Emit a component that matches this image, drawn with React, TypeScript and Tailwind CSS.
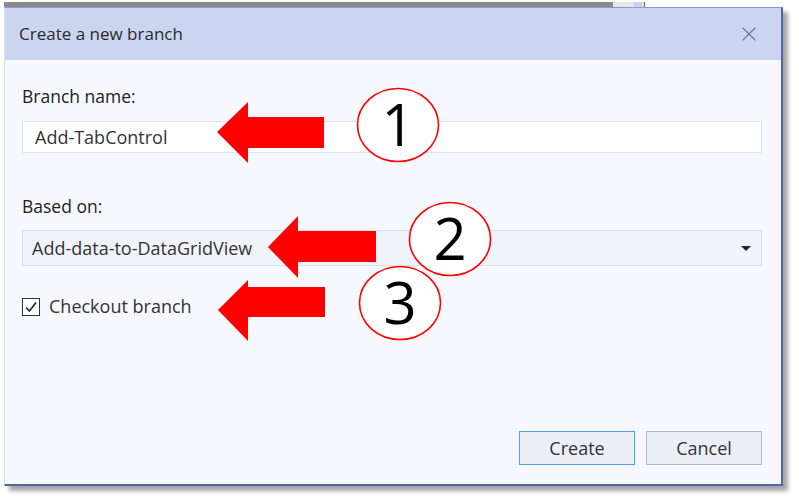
import { X } from "lucide-react";

const ui = { fontFamily: '"Open Sans", "Noto Sans", sans-serif' };

function Arrow({ tip, headBack, headTop, headBottom, shaftTop, shaftBottom, end }: any) {
  const cy = tip[1];
  return (
    <polygon
      points={`${tip[0]},${cy} ${headBack},${headTop} ${headBack},${shaftTop} ${end},${shaftTop} ${end},${shaftBottom} ${headBack},${shaftBottom} ${headBack},${headBottom}`}
      fill="#ff0000"
    />
  );
}

function Callout({ cx, cy, n }: { cx: number; cy: number; n: string }) {
  return (
    <g>
      <ellipse cx={cx} cy={cy} rx={40.5} ry={36.5} fill="#ffffff" stroke="#ff0000" strokeWidth={1.6} />
      <text
        x={cx}
        y={cy + 21}
        textAnchor="middle"
        fontSize={58}
        fontFamily='"Open Sans", "Liberation Sans", sans-serif'
        fill="#000"
      >
        {n}
      </text>
    </g>
  );
}

export default function App() {
  return (
    <div className="relative w-[799px] h-[502px] bg-white overflow-hidden" style={ui}>
      {/* window behind the dialog */}
      <div className="flex h-[7px] pt-[2px] pl-[4px]">
        <div className="w-[609px] h-[5px] bg-[#8a8a8a]" />
        <div className="w-[32px] h-[5px] bg-[#e4e6ea] border-r border-[#666] flex justify-end pr-[2px]">
          <div className="w-[8px] h-[5px] bg-[#c5d2e8]" />
        </div>
      </div>

      <div className="ml-[4px] w-[779px] h-[479px] flex flex-col border border-[#4f67a3] border-t-[#8c9cc8] border-l-[#d9def0] border-b-2 border-r-2 shadow-[5px_5px_4px_rgba(0,0,0,0.35)] bg-[#f6f8fe]">
        <div className="h-[52px] shrink-0 bg-[#ccd5ef] flex items-center justify-between pl-[14px] pr-[20px]">
          <span className="text-[17px] text-[#2a2a2a]">Create a new branch</span>
          <X size={24} strokeWidth={1.1} className="text-[#6b7090]" />
        </div>

        <div className="flex flex-col flex-1 pl-[17px] pr-[19px]">
          <div className="mt-[24px] text-[17.5px] text-[#222] leading-[24px]">Branch name:</div>
          <div className="mt-[13px] h-[32px] bg-white border border-[#dfe2ea] flex items-center pl-[12px] text-[18px] text-[#333]">
            Add-TabControl
          </div>

          <div className="mt-[41px] text-[17.5px] text-[#222] leading-[24px]">Based on:</div>
          <div className="mt-[12px] h-[36px] bg-[#f1f3fb] border border-[#dcdfe8] flex items-center justify-between pl-[9px] pr-[10px] text-[18px] text-[#333]">
            <span>Add-data-to-DataGridView</span>
            <span className="w-0 h-0 border-l-[5px] border-r-[5px] border-t-[5px] border-l-transparent border-r-transparent border-t-[#222]" />
          </div>

          <div className="mt-[27px] flex items-center gap-[9px]">
            <div className="w-[18px] h-[18px] border border-[#333] bg-white flex items-center justify-center">
              <svg width="14" height="14" viewBox="0 0 14 14">
                <path d="M2 7.5 L5.5 11 L12 2.5" fill="none" stroke="#222" strokeWidth="1.6" />
              </svg>
            </div>
            <span className="text-[18px] text-[#333]">Checkout branch</span>
          </div>

          <div className="mt-auto mb-[19px] flex justify-end gap-[11px]">
            <button className="w-[116px] h-[34px] bg-[#eceef5] border border-[#4fa0ea] text-[18px] text-[#333]">
              Create
            </button>
            <button className="w-[116px] h-[34px] bg-[#eceef5] border border-[#b5b5b5] text-[18px] text-[#333]">
              Cancel
            </button>
          </div>
        </div>
      </div>

      {/* annotations */}
      <svg className="absolute inset-0 pointer-events-none" width={799} height={502}>
        <Arrow tip={[217, 132]} headBack={248} headTop={102} headBottom={163} shaftTop={117} shaftBottom={148} end={324} />
        <Arrow tip={[268, 247]} headBack={298} headTop={216} headBottom={278} shaftTop={231} shaftBottom={262} end={376} />
        <Arrow tip={[218, 310]} headBack={248} headTop={280} headBottom={341} shaftTop={287} shaftBottom={317} end={325} />
        <Callout cx={398} cy={125} n="1" />
        <Callout cx={400} cy={303} n="3" />
        <Callout cx={450} cy={239} n="2" />
      </svg>
    </div>
  );
}
